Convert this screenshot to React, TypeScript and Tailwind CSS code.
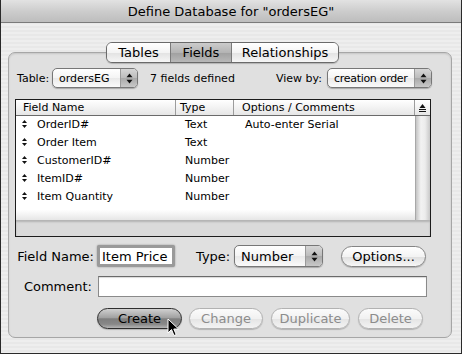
import React from "react";

const UpDown = ({ className = "" }: { className?: string }) => (
  <svg width="7" height="11" viewBox="0 0 7 11" className={className}>
    <path d="M3.5 0.5 L6.5 4.2 L0.5 4.2 Z" fill="#111" />
    <path d="M3.5 10.5 L6.5 6.8 L0.5 6.8 Z" fill="#111" />
  </svg>
);

const RowArrow = () => (
  <svg width="5" height="8" viewBox="0 0 5 8">
    <path d="M2.5 0 L5 3 L0 3 Z" fill="#111" />
    <path d="M2.5 8 L5 5 L0 5 Z" fill="#111" />
  </svg>
);

function Popup({ label, w, h, text }: { label: string; w: string; h: string; text: string }) {
  return (
    <div
      className={`${w} ${h} flex items-stretch rounded-[5px] border border-[#777] bg-[linear-gradient(to_bottom,#ffffff,#f4f4f4_50%,#e9e9e9_51%,#fafafa)] shadow-[0_1px_1px_rgba(0,0,0,0.25)] overflow-hidden`}
    >
      <div className={`flex-1 flex items-center pl-[6px] ${text} text-black leading-none whitespace-nowrap overflow-hidden`}>{label}</div>
      <div className="w-[17px] shrink-0 flex items-center justify-center border-l border-[#9a9a9a] bg-[linear-gradient(to_bottom,#d6d6d6,#bcbcbc_50%,#a9a9a9_51%,#c8c8c8)]">
        <UpDown />
      </div>
    </div>
  );
}

function Btn({
  label,
  w,
  kind = "normal",
}: {
  label: string;
  w: string;
  kind?: "normal" | "disabled" | "default";
}) {
  const styles =
    kind === "default"
      ? "border-[#2e2e2e] bg-[linear-gradient(to_bottom,#d0d0d0,#a2a2a2_45%,#7e7e7e_52%,#888888_80%,#b4b4b4)] text-black"
      : kind === "disabled"
      ? "border-[#b2b2b2] bg-[linear-gradient(to_bottom,#fbfbfb,#f1f1f1_50%,#e4e4e4_51%,#f3f3f3)] text-[#8c8c8c]"
      : "border-[#858585] bg-[linear-gradient(to_bottom,#ffffff,#f3f3f3_50%,#dedede_51%,#f7f7f7)] text-black";
  return (
    <div
      className={`${w} h-[21px] rounded-full border ${styles} flex items-center justify-center text-[13px] leading-none whitespace-nowrap shadow-[0_1px_1px_rgba(0,0,0,0.2)]`}
    >
      {label}
    </div>
  );
}

const rows = [
  { name: "OrderID#", type: "Text", opt: "Auto-enter Serial" },
  { name: "Order Item", type: "Text", opt: "" },
  { name: "CustomerID#", type: "Number", opt: "" },
  { name: "ItemID#", type: "Number", opt: "" },
  { name: "Item Quantity", type: "Number", opt: "" },
];

export default function App() {
  return (
    <div className="relative w-[462px] h-[354px] flex flex-col overflow-hidden border-x border-b border-[#2a2a2a] bg-[repeating-linear-gradient(to_bottom,#eeeeee_0px,#eeeeee_2px,#e8e8e8_2px,#e8e8e8_4px)] font-['DejaVu_Sans',sans-serif] text-black">
      {/* Title bar */}
      <div className="h-[23px] shrink-0 flex items-center justify-center border-b border-[#7a7a7a] bg-[linear-gradient(to_bottom,#e2e2e2,#cdcdcd_50%,#bdbdbd)] text-[13px] leading-none whitespace-nowrap">
        Define Database for "ordersEG"
      </div>

      {/* Tabs */}
      <div className="mt-[19px] ml-[105px] relative z-10 -mb-[11px] flex h-[21px] w-[233px] rounded-[6px] border border-[#6a6a6a] overflow-hidden shadow-[0_1px_1px_rgba(0,0,0,0.2)] text-[13px] leading-none">
        <div className="w-[63px] flex items-center justify-center bg-[linear-gradient(to_bottom,#ffffff,#f4f4f4_50%,#e2e2e2_51%,#f6f6f6)]">
          Tables
        </div>
        <div className="w-[62px] flex items-center justify-center border-x border-[#7a7a7a] bg-[linear-gradient(to_bottom,#cccccc,#b4b4b4_50%,#a0a0a0_51%,#b8b8b8)]">
          Fields
        </div>
        <div className="flex-1 flex items-center justify-center bg-[linear-gradient(to_bottom,#ffffff,#f4f4f4_50%,#e2e2e2_51%,#f6f6f6)]">
          Relationships
        </div>
      </div>

      {/* Group box */}
      <div className="ml-[7px] w-[444px] rounded-[7px] border border-[#a6a6a6] bg-[#e0e0e0] pt-[15px] pb-[8px] shadow-[inset_0_1px_2px_rgba(0,0,0,0.12)]">
        {/* Table row */}
        <div className="h-[20px] flex items-center pl-[8px] pr-[19px] text-[11px] leading-none whitespace-nowrap">
          <div className="w-[35px]">Table:</div>
          <Popup label="ordersEG" w="w-[86px]" h="h-[20px]" text="text-[11px]" />
          <div className="ml-[12px]">7 fields defined</div>
          <div className="flex-1" />
          <div className="mr-[5px]">View by:</div>
          <Popup label="creation order" w="w-[105px]" h="h-[20px]" text="text-[11px] tracking-[-0.3px]" />
        </div>

        {/* List */}
        <div className="mt-[11px] ml-[6px] w-[416px] h-[138px] border border-[#1c1c1c] flex flex-col bg-white text-[11px] leading-none whitespace-nowrap">
          <div className="h-[16px] shrink-0 flex border-b border-[#6a6a6a] bg-[linear-gradient(to_bottom,#ffffff,#f0f0f0_60%,#e6e6e6)]">
            <div className="w-[159px] flex items-center pl-[7px]">Field Name</div>
            <div className="w-[58px] flex items-center pl-[4px] border-l border-[#9c9c9c]">Type</div>
            <div className="w-[181px] flex items-center pl-[8px] border-l border-[#9c9c9c]">Options / Comments</div>
            <div className="flex-1 flex items-center justify-center border-l border-[#9c9c9c]">
              <svg width="7" height="8" viewBox="0 0 7 8">
                <path d="M3.5 0 L6.5 4 L0.5 4 Z" fill="#111" />
                <rect x="0" y="5" width="7" height="1" fill="#111" />
                <rect x="0" y="7" width="7" height="1" fill="#111" />
              </svg>
            </div>
          </div>
          <div className="flex-1 flex min-h-0">
            <div className="w-[399px] bg-[linear-gradient(to_bottom,#ffffff_90%,#e6e6e6)] overflow-hidden">
              <div className="-mt-[1px]">
                {rows.map((r) => (
                  <div key={r.name} className="h-[18px] flex items-center">
                    <div className="w-[159px] flex items-center pl-[6px]">
                      <RowArrow />
                      <span className="ml-[10px]">{r.name}</span>
                    </div>
                    <div className="w-[58px] pl-[10px]">{r.type}</div>
                    <div className="flex-1 pl-[12px]">{r.opt}</div>
                  </div>
                ))}
              </div>
            </div>
            <div className="flex-1 border-l border-[#a8a8a8] bg-[linear-gradient(to_right,#c4c4c4,#f2f2f2_35%,#ececec_65%,#c8c8c8)]" />
          </div>
          <div className="h-[16px] shrink-0 bg-[#dadada] shadow-[inset_0_2px_2px_rgba(0,0,0,0.18)]" />
        </div>

        {/* Field name row */}
        <div className="mt-[8px] h-[22px] flex items-center text-[13px] leading-none whitespace-nowrap">
          <div className="w-[85px] text-right">Field Name:</div>
          <div className="ml-[3px] w-[78px] h-[22px] rounded-[2px] border-[3px] border-[#9a9a9a] bg-white flex items-center pl-[2px] shadow-[0_0_2px_rgba(0,0,0,0.35)]">
            Item Price
          </div>
          <div className="ml-[21px] w-[38px]">Type:</div>
          <Popup label="Number" w="w-[89px]" h="h-[22px]" text="text-[13px]" />
          <div className="ml-[18px]">
            <Btn label="Options..." w="w-[85px]" />
          </div>
        </div>

        {/* Comment row */}
        <div className="mt-[9px] h-[21px] flex items-center text-[13px] leading-none whitespace-nowrap">
          <div className="w-[83px] text-right">Comment:</div>
          <div className="ml-[6px] w-[329px] h-[21px] border border-[#8a8a8a] border-t-[#6a6a6a] bg-white shadow-[inset_0_1px_1px_rgba(0,0,0,0.15)]" />
        </div>

        {/* Buttons */}
        <div className="mt-[11px] flex pl-[88px]">
          <Btn label="Create" w="w-[85px]" kind="default" />
          <div className="ml-[7px]">
            <Btn label="Change" w="w-[74px]" kind="disabled" />
          </div>
          <div className="ml-[8px]">
            <Btn label="Duplicate" w="w-[79px]" kind="disabled" />
          </div>
          <div className="ml-[8px]">
            <Btn label="Delete" w="w-[65px]" kind="disabled" />
          </div>
        </div>
      </div>

      {/* Mouse cursor */}
      <svg
        className="absolute left-[166px] top-[318px]"
        width="13"
        height="19"
        viewBox="0 0 13 19"
      >
        <path
          d="M1 1 L1 15 L4.5 11.5 L7 17.5 L9.2 16.6 L6.8 11 L11.5 11 Z"
          fill="#000"
          stroke="#fff"
          strokeWidth="1"
          strokeLinejoin="round"
        />
      </svg>
    </div>
  );
}
